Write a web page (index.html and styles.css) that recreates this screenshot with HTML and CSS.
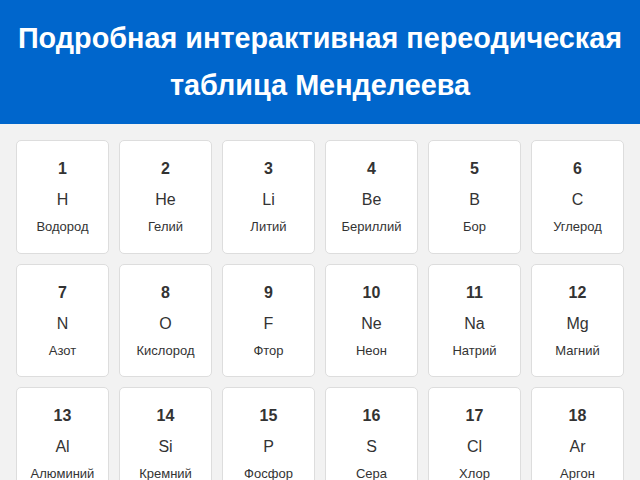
FILE: index.html
```html
<!DOCTYPE html>
<html lang="ru">
<head>
<meta charset="utf-8">
<title>Таблица Менделеева</title>
<link rel="stylesheet" href="styles.css">
</head>
<body>
<header class="header">
  <h1 class="title">Подробная интерактивная переодическая таблица Менделеева</h1>
</header>
<main class="table">
  <div class="element"><div class="number">1</div><div class="symbol">H</div><div class="name">Водород</div></div>
  <div class="element"><div class="number">2</div><div class="symbol">He</div><div class="name">Гелий</div></div>
  <div class="element"><div class="number">3</div><div class="symbol">Li</div><div class="name">Литий</div></div>
  <div class="element"><div class="number">4</div><div class="symbol">Be</div><div class="name">Бериллий</div></div>
  <div class="element"><div class="number">5</div><div class="symbol">B</div><div class="name">Бор</div></div>
  <div class="element"><div class="number">6</div><div class="symbol">C</div><div class="name">Углерод</div></div>
  <div class="element"><div class="number">7</div><div class="symbol">N</div><div class="name">Азот</div></div>
  <div class="element"><div class="number">8</div><div class="symbol">O</div><div class="name">Кислород</div></div>
  <div class="element"><div class="number">9</div><div class="symbol">F</div><div class="name">Фтор</div></div>
  <div class="element"><div class="number">10</div><div class="symbol">Ne</div><div class="name">Неон</div></div>
  <div class="element"><div class="number">11</div><div class="symbol">Na</div><div class="name">Натрий</div></div>
  <div class="element"><div class="number">12</div><div class="symbol">Mg</div><div class="name">Магний</div></div>
  <div class="element"><div class="number">13</div><div class="symbol">Al</div><div class="name">Алюминий</div></div>
  <div class="element"><div class="number">14</div><div class="symbol">Si</div><div class="name">Кремний</div></div>
  <div class="element"><div class="number">15</div><div class="symbol">P</div><div class="name">Фосфор</div></div>
  <div class="element"><div class="number">16</div><div class="symbol">S</div><div class="name">Сера</div></div>
  <div class="element"><div class="number">17</div><div class="symbol">Cl</div><div class="name">Хлор</div></div>
  <div class="element"><div class="number">18</div><div class="symbol">Ar</div><div class="name">Аргон</div></div>
</main>
</body>
</html>
```
FILE: styles.css
```css
html, body {
  margin: 0;
  padding: 0;
}
body {
  background: #f2f2f2;
  font-family: "Liberation Sans", Arial, sans-serif;
  color: #333;
}
.header {
  background: #0066cc;
  color: #fff;
  padding: 15px 8px;
  text-align: center;
}
.title {
  margin: 0;
  font-size: 28.8px;
  line-height: 47px;
  font-weight: bold;
}
.table {
  display: grid;
  grid-template-columns: repeat(6, 1fr);
  gap: 10px;
  padding: 16px;
}
.element {
  background: #fff;
  border: 1px solid #ddd;
  border-radius: 5px;
  padding: 19px 10px 18.5px;
  text-align: center;
}
.number {
  font-size: 16px;
  font-weight: bold;
}
.symbol {
  font-size: 16px;
  margin: 13px 0 10px;
}
.name {
  font-size: 13px;
}
```
